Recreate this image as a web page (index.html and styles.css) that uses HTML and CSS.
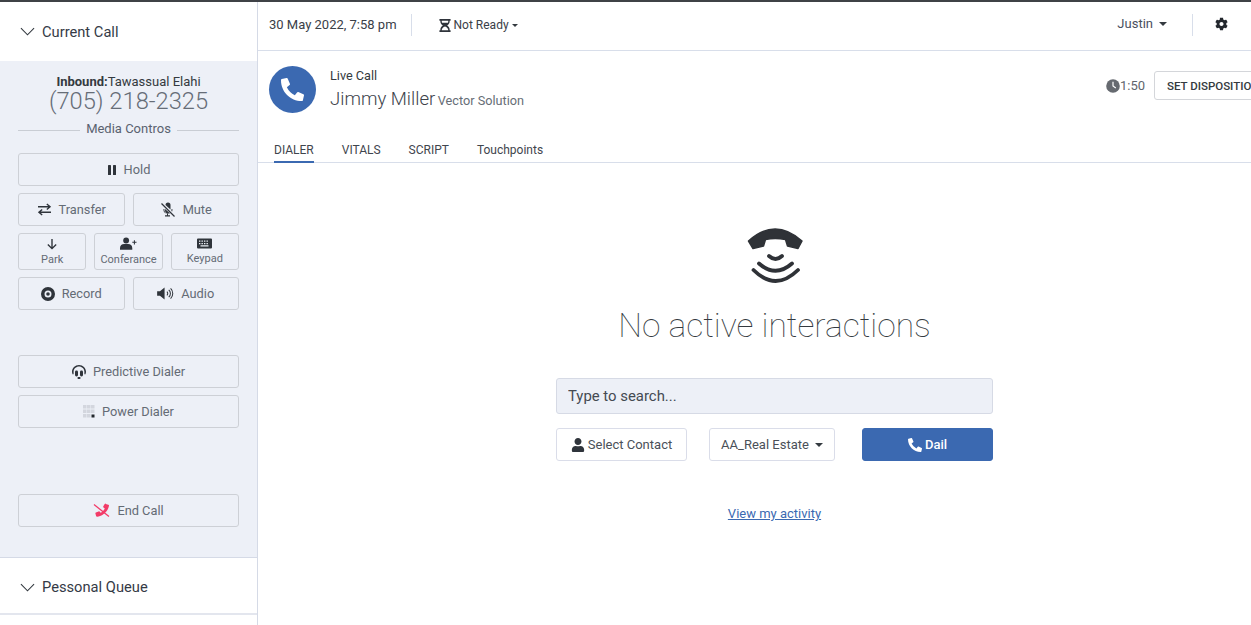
FILE: index.html
```html
<!DOCTYPE html>
<html lang="en">

<head>
    <meta charset="UTF-8">
    <meta name="viewport" content="width=device-width, initial-scale=1.0">
    <title>Live Call</title>
    <link rel="stylesheet" href="styles.css">
</head>

<body>
    <div class="app">
        <aside class="sidebar">
            <div class="acc-head acc-first">
                <svg class="chevron" viewBox="0 0 16 9"><path d="M1 1l7 7 7-7"/></svg>
                <span>Current Call</span>
            </div>
            <div class="panel">
                <div class="caller"><b>Inbound:</b>Tawassual Elahi</div>
                <div class="caller-number">(705) 218-2325</div>
                <div class="divider"><span>Media Contros</span></div>

                <button class="btn btn-first">
                    <svg class="ico ico-pause" viewBox="0 0 10 12"><rect x="1" y="1" width="3" height="10" rx=".6"/><rect x="6" y="1" width="3" height="10" rx=".6"/></svg>
                    Hold
                </button>
                <div class="btn-row">
                    <button class="btn">
                        <svg class="ico ico-line ico-transfer" viewBox="0 0 16 14"><path d="M1 4h13M10.500 1l3.500 3-3.500 3M15 10H2M5.500 7L2 10l3.500 3"/></svg>
                        Transfer
                    </button>
                    <button class="btn">
                        <svg class="ico ico-mute" viewBox="0 0 16 16"><path d="M5.500 3a2.500 2.500 0 0 1 5 0v4.500L5.500 3zM5 7l5 4.200c-2.300 1-5-.2-5-3V7zM3.500 7h.9v1.300c0 1.900 1.700 3.500 3.600 3.500v1.400h2v1.300H5v-1.300h2v-1.500C5 11.400 3.500 10 3.500 8.200V7zM11.500 7h.9v1.200c0 .5-.1 1-.3 1.400l-.8-.7c.1-.2.2-.5.2-.7V7z"/><path class="slash" d="M1.500 1.500l13 13"/></svg>
                        Mute
                    </button>
                </div>
                <div class="btn-row">
                    <button class="btn btn-small">
                        <svg class="ico ico-line ico-park" viewBox="0 0 12 13"><path d="M6 1v10.500M1.500 7L6 11.500 10.500 7"/></svg>
                        Park
                    </button>
                    <button class="btn btn-small">
                        <svg class="ico ico-plus" viewBox="0 0 18 13"><circle cx="6.500" cy="3.300" r="3.100"/><path d="M0 13v-1.800C0 8.700 2 7 4.300 7h4.400C11 7 13 8.700 13 11.200V13z"/><path d="M14.700 3h1.100v1.700h1.700v1.100h-1.700v1.700h-1.100V5.800H13V4.700h1.700z"/></svg>
                        Conferance
                    </button>
                    <button class="btn btn-small">
                        <svg class="ico ico-keys" viewBox="0 0 15 10"><path fill-rule="evenodd" d="M1 0h13a1 1 0 0 1 1 1v8a1 1 0 0 1-1 1H1a1 1 0 0 1-1-1V1a1 1 0 0 1 1-1zm1 2v1.300h1.400V2zm2.500 0v1.300h1.400V2zm2.500 0v1.300h1.400V2zm2.500 0v1.300h1.400V2zM2 4.400v1.300h1.400V4.400zm2.500 0v1.300h1.400V4.400zm2.500 0v1.300h1.400V4.400zm2.500 0v1.300h1.400V4.400zM3.500 6.800v1.300h8V6.800z"/></svg>
                        Keypad
                    </button>
                </div>
                <div class="btn-row">
                    <button class="btn">
                        <svg class="ico ico-record" viewBox="0 0 14 14"><path fill-rule="evenodd" d="M7 0a7 7 0 1 1 0 14A7 7 0 0 1 7 0zm0 3.500a3.500 3.500 0 1 0 0 7 3.500 3.500 0 0 0 0-7z"/><circle cx="7" cy="7" r="1.800"/></svg>
                        Record
                    </button>
                    <button class="btn">
                        <svg class="ico ico-audio" viewBox="0 0 18 14"><path d="M0 4.500h3L8 .5v13l-5-4H0z"/><path class="wave" d="M10.500 5c1.200 1.100 1.200 2.900 0 4M12.500 3c2.400 2.200 2.400 5.800 0 8M14.500 1.500c3.100 3 3.100 8 0 11"/></svg>
                        Audio
                    </button>
                </div>

                <button class="btn btn-dialer">
                    <svg class="ico ico-headset" viewBox="0 0 14 14"><path d="M7 0C3.100 0 0 3 0 6.800c0 .9.300 1.900.8 2.700.3-.1.500-.2.800-.2V6.800C1.600 3.900 4 1.600 7 1.600s5.400 2.300 5.400 5.200v2.500c.3 0 .5.100.8.200.5-.8.800-1.800.8-2.700C14 3 10.900 0 7 0z"/><rect x="3" y="5.500" width="3" height="6" rx="1.400"/><rect x="8" y="5.500" width="3" height="6" rx="1.400"/><rect x="5.500" y="12" width="3" height="2" rx=".8"/></svg>
                    Predictive Dialer
                </button>
                <button class="btn btn-next">
                    <svg class="ico ico-grid" viewBox="0 0 12 13"><path d="M0 0h3.500v3.500H0zM4 0h3.500v3.500H4zM8 0h3.500v3.500H8zM0 4.500h3.500V8H0zM4 4.500h3.500V8H4zM8 4.500h3.500V8H8zM0 9h3.500v3.500H0zM4 9h3.500v3.500H4z"/><rect class="grid-on" x="8.500" y="9.500" width="3" height="3"/></svg>
                    Power Dialer
                </button>

                <button class="btn btn-end">
                    <svg class="ico ico-endcall" viewBox="0 0 17 14"><path d="M12.800.5l2.500.7c.5.100.8.600.7 1.100-.7 3.700-3 6.800-6.300 8.900-1.700 1-3.600 1.800-5.500 2.100-.5.100-1-.2-1.100-.7l-.7-2.600c-.1-.4.100-.9.500-1.100L5.600 7.900c.4-.2.900-.1 1.100.3l1 1.100c1.800-1 3.200-2.500 4.100-4.400l-1.300-1c-.3-.3-.4-.8-.2-1.100l1.400-2.300c.2-.4.700-.6 1.100-.5z"/><path class="slash" d="M1 1l15 12"/></svg>
                    End Call
                </button>
            </div>
            <div class="acc-head acc-second">
                <svg class="chevron" viewBox="0 0 16 9"><path d="M1 1l7 7 7-7"/></svg>
                <span>Pessonal Queue</span>
            </div>
        </aside>

        <main class="main">
            <header class="topbar">
                <span class="date">30 May 2022, 7:58 pm</span>
                <span class="status">
                    <svg class="ico-hourglass" viewBox="0 0 12 14"><path fill-rule="evenodd" d="M0 0h12v1.800h-1v1c0 1.700-1.100 3.300-2.700 4.200C9.900 7.900 11 9.500 11 11.200v1h1V14H0v-1.800h1v-1C1 9.500 2.100 7.900 3.700 7 2.100 6.100 1 4.500 1 2.800v-1H0zm2.500 1.800v1c0 .4.100.8.300 1.200h6.400c.2-.4.300-.8.300-1.200v-1zM6 8.200c-1.900.7-3.500 2-3.500 4h7c0-2-1.600-3.300-3.500-4z"/></svg>
                    Not Ready<i class="caret caret-small"></i>
                </span>
                <span class="user">Justin<i class="caret"></i></span>
                <svg class="gear" viewBox="0 0 512 512"><path d="M487.4 315.700l-42.600-24.600c4.300-23.200 4.300-47 0-70.200l42.600-24.600c4.900-2.800 7.100-8.600 5.500-14-11.100-35.600-30-67.800-54.700-94.600-3.800-4.100-10-5.100-14.800-2.300L380.800 110c-17.900-15.400-38.500-27.300-60.800-35.100V25.800c0-5.600-3.900-10.500-9.400-11.700-36.700-8.200-74.300-7.800-109.200 0-5.500 1.200-9.400 6.100-9.400 11.700V75c-22.200 7.900-42.800 19.800-60.800 35.100L88.700 85.500c-4.900-2.800-11-1.900-14.800 2.300-24.700 26.700-43.600 58.900-54.700 94.600-1.700 5.400.6 11.200 5.500 14L67.300 221c-4.300 23.200-4.300 47 0 70.200l-42.600 24.600c-4.900 2.800-7.100 8.600-5.500 14 11.100 35.600 30 67.800 54.700 94.600 3.800 4.100 10 5.100 14.800 2.300l42.600-24.600c17.900 15.400 38.500 27.300 60.800 35.100v49.200c0 5.600 3.900 10.500 9.400 11.700 36.700 8.200 74.300 7.800 109.200 0 5.500-1.200 9.400-6.100 9.400-11.700v-49.200c22.200-7.900 42.800-19.800 60.800-35.100l42.600 24.600c4.900 2.800 11 1.900 14.800-2.300 24.700-26.700 43.600-58.900 54.700-94.600 1.500-5.500-.7-11.300-5.600-14.100zM256 336c-44.100 0-80-35.900-80-80s35.900-80 80-80 80 35.900 80 80-35.900 80-80 80z"/></svg>
            </header>

            <div class="content">
                <section class="call-head">
                    <div class="avatar">
                        <svg viewBox="0 0 512 512"><path d="M497.390 361.800l-112-48a24 24 0 0 0-28 6.900l-49.600 60.600A370.660 370.660 0 0 1 130.600 204.110l60.600-49.600a23.940 23.940 0 0 0 6.900-28l-48-112A24.160 24.160 0 0 0 122.600.610l-104 24A24 24 0 0 0 0 48c0 256.500 207.900 464 464 464a24 24 0 0 0 23.400-18.600l24-104a24.290 24.290 0 0 0-14.010-27.600z"/></svg>
                    </div>
                    <div class="call-info">
                        <div class="call-label">Live Call</div>
                        <div class="call-name">Jimmy Miller <small>Vector Solution</small></div>
                    </div>
                    <div class="timer">
                        <svg viewBox="0 0 14 14"><circle cx="7" cy="7" r="6.800"/><path class="hands" d="M7 2.800V7l2.800 2"/></svg>
                        1:50
                    </div>
                    <button class="btn-disposition">SET DISPOSITION</button>
                </section>

                <nav class="tabs">
                    <a class="tab active">DIALER</a>
                    <a class="tab">VITALS</a>
                    <a class="tab">SCRIPT</a>
                    <a class="tab">Touchpoints</a>
                </nav>

                <section class="empty">
                    <svg class="empty-icon" viewBox="0 0 56 56">
                        <path class="handset" d="M1.500 13Q28-11 55 13L51 20.500 40.500 18 38.500 11.500Q28 9.500 18.500 11.500L16.500 18 6 20.500z"/>
                        <path class="wave" d="M22 28Q28.500 34 35 28"/>
                        <path class="wave" d="M12 35.500Q28.500 50 45 35.500"/>
                        <path class="wave" d="M6.500 42Q28.500 64 51 42"/>
                    </svg>
                    <h1>No active interactions</h1>
                    <input class="search" type="text" placeholder="Type to search...">
                    <div class="actions">
                        <button class="action action-contact">
                            <svg viewBox="0 0 448 512"><path d="M224 256c70.700 0 128-57.300 128-128S294.700 0 224 0 96 57.300 96 128s57.300 128 128 128zm89.600 32h-16.700c-22.200 10.200-46.900 16-72.900 16s-50.600-5.800-72.900-16h-16.700C60.200 288 0 348.200 0 422.400V464c0 26.500 21.500 48 48 48h352c26.500 0 48-21.500 48-48v-41.600c0-74.200-60.200-134.400-134.400-134.400z"/></svg>
                            Select Contact
                        </button>
                        <button class="action action-list">AA_Real Estate<i class="caret"></i></button>
                        <button class="action action-dial">
                            <svg viewBox="0 0 512 512"><path d="M497.390 361.800l-112-48a24 24 0 0 0-28 6.900l-49.600 60.600A370.660 370.660 0 0 1 130.600 204.110l60.600-49.600a23.940 23.940 0 0 0 6.900-28l-48-112A24.160 24.160 0 0 0 122.600.610l-104 24A24 24 0 0 0 0 48c0 256.500 207.900 464 464 464a24 24 0 0 0 23.400-18.600l24-104a24.290 24.290 0 0 0-14.010-27.600z"/></svg>
                            Dail
                        </button>
                    </div>
                    <a class="activity" href="#">View my activity</a>
                </section>
            </div>
        </main>
    </div>
</body>

</html>
```

FILE: styles.css
```css
* {
    box-sizing: border-box;
}

html,
body {
    height: 100%;
}

body {
    margin: 0;
    overflow: hidden;
    background-color: white;
    border-top: 2px solid #3f4246;
    font-family: Roboto, "Liberation Sans", sans-serif;
    color: #343a40;
}

.app {
    display: flex;
    height: 623px;
}

/* left column */
.sidebar {
    flex: 0 0 258px;
    border-right: 1px solid #d5dae6;
}

.acc-head {
    display: flex;
    align-items: center;
    gap: 7px;
    padding-left: 20px;
    font-size: 14.700px;
    color: #343a46;
}

.acc-first {
    height: 59px;
}

.acc-second {
    height: 58px;
    padding-top: 3px;
    border-top: 1px solid #d5dae6;
    border-bottom: 2px solid #e3e6ee;
}

.chevron {
    width: 15px;
    height: 9px;
    fill: none;
    stroke: #343a40;
    stroke-width: 1.200;
}

.panel {
    height: 496px;
    padding: 14px 18px 0;
    background-color: #edf0f7;
}

.caller {
    text-align: center;
    font-size: 13px;
    line-height: 14px;
    color: #343a40;
}

.caller b {
    font-weight: 700;
}

.caller-number {
    text-align: center;
    font-size: 23.700px;
    font-weight: 300;
    line-height: 25px;
    color: #666d77;
}

.divider {
    display: flex;
    align-items: center;
    gap: 6px;
    margin-top: 6px;
    font-size: 13px;
    line-height: 18px;
    color: #5a6270;
}

.divider::before,
.divider::after {
    content: "";
    flex: 1;
    height: 1px;
    margin-top: 3px;
    background-color: #c9cdd4;
}

.btn {
    display: flex;
    align-items: center;
    justify-content: center;
    gap: 7px;
    width: 100%;
    height: 33px;
    padding: 0;
    background-color: #edf0f7;
    border: 1px solid #cdd0d6;
    border-radius: 3px;
    font-family: inherit;
    font-size: 12.800px;
    color: #646b75;
}

.btn-first {
    margin-top: 15px;
}

.btn-row {
    display: flex;
    gap: 8px;
    margin-top: 7px;
}

.btn-small {
    flex-direction: column;
    gap: 3px;
    height: 37px;
    font-size: 11px;
    line-height: 13px;
}

.btn-dialer {
    margin-top: 45px;
}

.btn-next {
    margin-top: 7px;
}

.btn-end {
    margin-top: 66px;
}

.ico {
    flex: none;
    fill: #2f343b;
}

.ico-line,
.slash,
.wave {
    fill: none;
    stroke: #2f343b;
}

.ico-pause {
    width: 10px;
    height: 12px;
}

.ico-transfer {
    width: 15px;
    height: 13px;
    stroke-width: 1.500;
}

.ico-mute {
    width: 16px;
    height: 16px;
}

.ico-mute .slash {
    stroke-width: 1.300;
}

.ico-park {
    width: 12px;
    height: 12px;
    stroke-width: 1.500;
}

.ico-plus {
    width: 17px;
    height: 13px;
}

.ico-keys {
    width: 15px;
    height: 11px;
}

.ico-record {
    width: 14px;
    height: 14px;
}

.ico-audio {
    width: 17px;
    height: 13px;
}

.ico-audio .wave {
    stroke-width: 1.100;
}

.ico-headset {
    width: 14px;
    height: 14px;
}

.ico-grid {
    width: 12px;
    height: 13px;
    fill: #d3d6de;
}

.grid-on {
    fill: #23272d;
}

.ico-endcall {
    width: 17px;
    height: 15px;
    fill: #f23b68;
}

.ico-endcall .slash {
    stroke: #f23b68;
    stroke-width: 1.300;
}

/* right column */
.main {
    flex: 1;
    min-width: 0;
    overflow: hidden;
}

.topbar {
    display: flex;
    align-items: center;
    height: 49px;
    padding: 0 23px 2px 11px;
    border-bottom: 1px solid #d8deea;
    font-size: 13px;
    color: #3a4048;
}

.date {
    padding-right: 14px;
    height: 22px;
    line-height: 22px;
    border-right: 1px solid #d8deea;
}

.status {
    display: flex;
    align-items: center;
    gap: 3px;
    margin-left: 27px;
    font-size: 12px;
}

.ico-hourglass {
    width: 12px;
    height: 13px;
    fill: #2f343b;
}

.user {
    margin-left: auto;
    padding-right: 25px;
    height: 22px;
    line-height: 20px;
    border-right: 1px solid #d8deea;
    color: #4a5060;
}

.gear {
    width: 13px;
    height: 14px;
    margin-left: 22px;
    margin-top: -2px;
    fill: #23272d;
}

.caret {
    display: inline-block;
    margin-left: 6px;
    vertical-align: 2px;
    border-top: 4px solid #343a40;
    border-left: 4px solid transparent;
    border-right: 4px solid transparent;
}

.caret-small {
    margin-left: 0;
    border-top-width: 3px;
    border-left-width: 3px;
    border-right-width: 3px;
}

/* the call area is wider than the window, its right end gets cut off */
.content {
    width: 1033px;
}

.call-head {
    display: flex;
    height: 91px;
    padding: 15px 0 0 11px;
}

.avatar {
    display: flex;
    align-items: center;
    justify-content: center;
    flex: none;
    width: 47px;
    height: 47px;
    border-radius: 50%;
    background-color: #3b69b1;
}

.avatar svg {
    width: 23px;
    height: 23px;
    fill: white;
}

.call-info {
    margin-left: 14px;
}

.call-label {
    margin-top: 2px;
    font-size: 12.700px;
    line-height: 16px;
}

.call-name {
    margin-top: 3px;
    font-size: 18.600px;
    font-weight: 300;
    line-height: 24px;
    word-spacing: 0;
    color: #3d434b;
}

.call-name small {
    margin-left: -2px;
    font-size: 12.700px;
    font-weight: 400;
    color: #666d76;
}

.timer {
    display: flex;
    align-items: center;
    height: 29px;
    margin-left: auto;
    margin-top: 5px;
    font-size: 13px;
    color: #5f656d;
}

.timer svg {
    width: 14px;
    height: 14px;
    fill: #666a70;
}

.timer .hands {
    fill: none;
    stroke: white;
    stroke-width: 1.200;
}

.btn-disposition {
    width: 137px;
    height: 29px;
    margin-top: 5px;
    margin-left: 9px;
    padding: 0 0 0 12px;
    text-align: left;
    background-color: white;
    border: 1px solid #d4d6da;
    border-radius: 3px;
    font-family: inherit;
    font-size: 11.500px;
    font-weight: 500;
    color: #343a40;
}

.tabs {
    display: flex;
    gap: 28px;
    width: 993px;
    height: 21px;
    padding-left: 16px;
    border-bottom: 1px solid #d8deea;
}

.tab {
    height: 21px;
    font-size: 12px;
    line-height: 16px;
    color: #3f454d;
}

.active {
    border-bottom: 2px solid #3b69b1;
}

.empty {
    display: flex;
    flex-direction: column;
    align-items: center;
}

.empty-icon {
    width: 56px;
    height: 56px;
    margin-top: 65px;
    overflow: visible;
}

.handset {
    fill: #2f3237;
    stroke: #2f3237;
    stroke-width: 1.500;
    stroke-linejoin: round;
}

.empty-icon .wave {
    stroke: #2f3237;
    stroke-width: 3.800;
    stroke-linecap: round;
}

.empty h1 {
    margin: 21px 0 0;
    font-size: 33.600px;
    font-weight: 100;
    line-height: 42px;
    color: #343a40;
}

.search {
    width: 437px;
    height: 36px;
    margin-top: 31px;
    padding: 0 11px;
    background-color: #edf0f7;
    border: 1px solid #d6dae5;
    border-radius: 3px;
    font-family: inherit;
    font-size: 14.900px;
}

.search::placeholder {
    color: #444a52;
    opacity: 1;
}

.actions {
    display: flex;
    width: 437px;
    margin-top: 14px;
}

.action {
    display: flex;
    align-items: center;
    justify-content: center;
    height: 33px;
    background-color: white;
    border: 1px solid #dadde9;
    border-radius: 3px;
    font-family: inherit;
    font-size: 13px;
    color: #4a5058;
}

.action svg {
    width: 14px;
    height: 14px;
    margin-right: 3px;
    fill: #2f343b;
}

.action-contact {
    width: 131px;
}

.action-list {
    width: 126px;
    margin-left: 22px;
}

.action-dial {
    width: 131px;
    margin-left: 27px;
    background-color: #3b69b1;
    border-color: #3b69b1;
    font-weight: 500;
    color: white;
}

.action-dial svg {
    fill: white;
}

.activity {
    margin-top: 45px;
    font-size: 13px;
    color: #3b69b1;
}
```
